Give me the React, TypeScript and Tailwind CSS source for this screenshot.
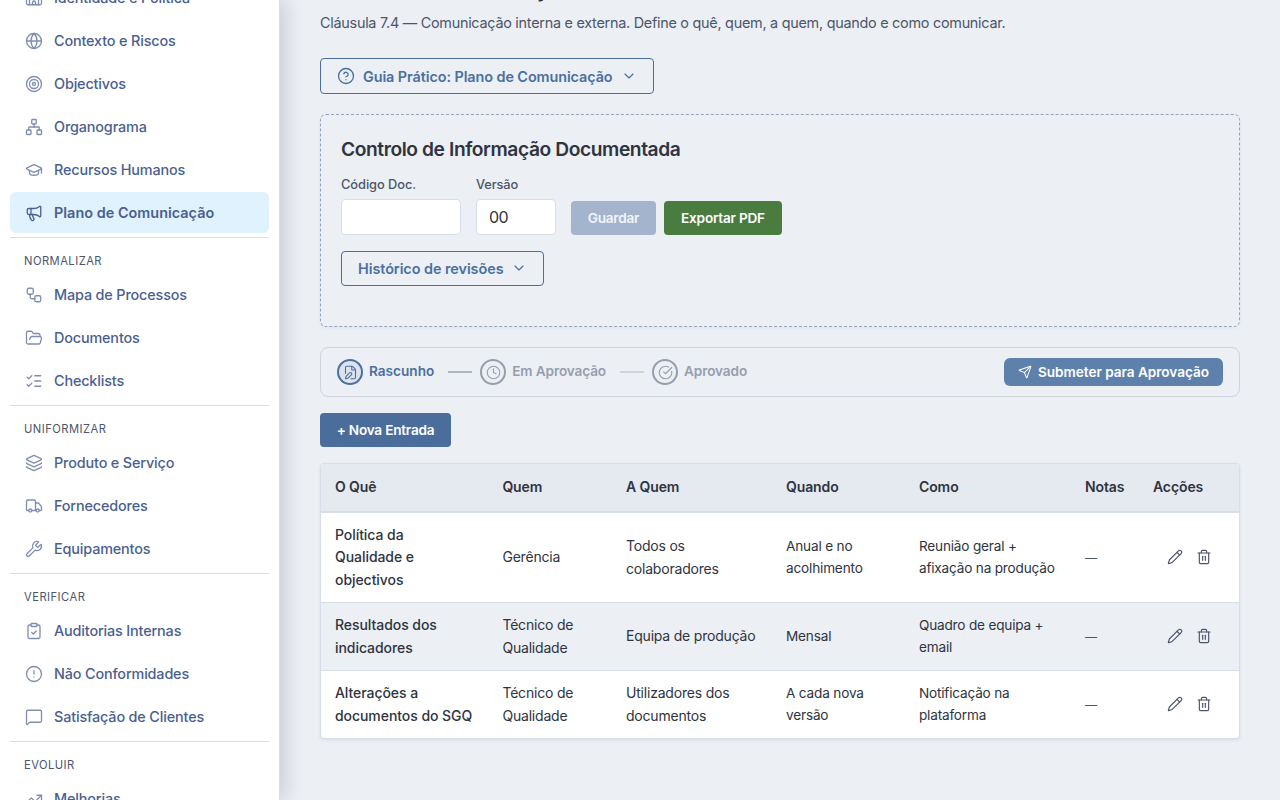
import React from "react";
import {
  Building2, Globe, Target, Network, GraduationCap, Megaphone, Workflow, FolderOpen, ListChecks,
  Layers, Truck, Wrench, ClipboardCheck, CircleAlert, MessageSquare, TrendingUp, CircleHelp,
  ChevronDown, FilePen, Clock, CircleCheckBig, Send, Pencil, Trash2,
} from "lucide-react";

type Item = { label: string; icon: React.ElementType; active?: boolean };
type Section = { title?: string; items: Item[] };

const sections: Section[] = [
  {
    items: [
      { label: "Identidade e Política", icon: Building2 },
      { label: "Contexto e Riscos", icon: Globe },
      { label: "Objectivos", icon: Target },
      { label: "Organograma", icon: Network },
      { label: "Recursos Humanos", icon: GraduationCap },
      { label: "Plano de Comunicação", icon: Megaphone, active: true },
    ],
  },
  {
    title: "NORMALIZAR",
    items: [
      { label: "Mapa de Processos", icon: Workflow },
      { label: "Documentos", icon: FolderOpen },
      { label: "Checklists", icon: ListChecks },
    ],
  },
  {
    title: "UNIFORMIZAR",
    items: [
      { label: "Produto e Serviço", icon: Layers },
      { label: "Fornecedores", icon: Truck },
      { label: "Equipamentos", icon: Wrench },
    ],
  },
  {
    title: "VERIFICAR",
    items: [
      { label: "Auditorias Internas", icon: ClipboardCheck },
      { label: "Não Conformidades", icon: CircleAlert },
      { label: "Satisfação de Clientes", icon: MessageSquare },
    ],
  },
  { title: "EVOLUIR", items: [{ label: "Melhorias", icon: TrendingUp }] },
];

const headers = ["O Quê", "Quem", "A Quem", "Quando", "Como", "Notas", "Acções"];

const rows = [
  {
    height: "h-[90px]",
    cells: ["Política da Qualidade e objectivos", "Gerência", "Todos os colaboradores", "Anual e no acolhimento", "Reunião geral + afixação na produção"],
  },
  {
    height: "h-[68px] bg-[#eceff4]",
    cells: ["Resultados dos indicadores", "Técnico de Qualidade", "Equipa de produção", "Mensal", "Quadro de equipa + email"],
  },
  {
    height: "h-[67px]",
    cells: ["Alterações a documentos do SGQ", "Técnico de Qualidade", "Utilizadores dos documentos", "A cada nova versão", "Notificação na plataforma"],
  },
];

const columns = "grid grid-cols-[167.4px_123.6px_160px_133px_166px_68px_1fr] items-center";

const cellStyles = [
  "pl-3.5 pr-[15px] text-[14px] leading-[22.4px] font-medium tracking-[-0.06px]",
  "px-3.5 text-[14px] leading-[22.4px] tracking-[-0.2px]",
  "pl-3.5 pr-2 text-[14px] leading-[22.4px] tracking-[-0.2px]",
  "px-3.5 text-[13.6px] leading-[21.76px] tracking-[-0.17px]",
  "px-3.5 text-[13.6px] leading-[21.76px] tracking-[-0.19px]",
];

function Sidebar() {
  return (
    <aside className="relative z-10 h-[800px] w-[280px] shrink-0 border-r border-[#d8dee9] bg-white shadow-[4px_0_20px_rgba(46,52,64,0.2)]">
      <nav className="h-full overflow-hidden px-2.5">
        <div className="-mt-[25px]">
          {sections.map((section, i) => (
            <div key={i} className={i > 0 ? "mt-1 border-t border-[#d8dee9]" : ""}>
              {section.title && (
                <div className="h-[34px] pt-[15px] pl-3.5 text-[11.2px] leading-[17px] tracking-[0.47px] text-[#4c566a]">
                  {section.title}
                </div>
              )}
              {section.items.map(({ label, icon: Icon, active }) => (
                <a
                  key={label}
                  className={
                    active
                      ? "mt-0.5 flex h-[41px] items-center gap-[11px] rounded-md bg-[#e0f2fe] pl-[15px] text-[14.4px] font-semibold tracking-[0.03px] text-[#4a5f8f]"
                      : "mt-0.5 flex h-[41px] items-center gap-[11px] rounded-md pl-[15px] text-[14.4px] font-medium tracking-[-0.15px] text-[#4a5f8f]"
                  }
                >
                  <Icon size={18} strokeWidth={1.75} className={active ? "" : "opacity-70"} />
                  {label}
                </a>
              ))}
            </div>
          ))}
        </div>
      </nav>
    </aside>
  );
}

function DocumentControl() {
  return (
    <section className="mt-5 h-[213px] rounded-md border border-dashed border-[#94a3c0] px-5 pt-[21px] shadow-[0_1px_3px_rgba(76,86,106,0.06)]">
      <h2 className="text-[19.2px] leading-[27px] font-semibold tracking-[-0.41px]">Controlo de Informação Documentada</h2>
      <div className="mt-3.5 flex items-end">
        <label className="w-[120px] text-[12.8px] leading-4 font-medium tracking-[-0.04px] text-[#4c566a]">
          Código Doc.
          <span className="mt-1.5 block h-9 rounded border border-[#d8dee9] bg-white" />
        </label>
        <label className="ml-[15px] w-20 text-[12.8px] leading-4 font-medium tracking-[-0.1px] text-[#4c566a]">
          Versão
          <span className="mt-1.5 flex h-9 items-center rounded border border-[#d8dee9] bg-white px-3 text-base font-normal tracking-[-0.5px] text-[#2e3440]">
            00
          </span>
        </label>
        <button className="ml-[15px] h-[34px] w-[85px] rounded bg-[#a5b4cd] text-[13.6px] font-semibold tracking-[-0.22px] text-[#f1f4f8]">Guardar</button>
        <button className="ml-2 h-[34px] w-[118px] rounded bg-[#4a7c3f] text-[13.6px] font-semibold tracking-[-0.22px] text-white">Exportar PDF</button>
      </div>
      <button className="mt-4 flex h-[35px] w-[203px] items-center rounded border border-[#4a6fa0] pl-4 text-[14.4px] font-semibold tracking-[-0.05px] text-[#4a6fa0]">
        Histórico de revisões
        <ChevronDown size={16} strokeWidth={1.75} className="mb-0.5 ml-[7px]" />
      </button>
    </section>
  );
}

function ApprovalFlow() {
  return (
    <section className="mt-5 flex h-[50px] items-center rounded-lg border border-[#ced2d9] px-4 text-[13.6px] leading-5 font-semibold text-[#969eae]">
      <span className="flex size-[26px] items-center justify-center rounded-full border-2 border-[#4a6fa0] bg-[#dce3ec] text-[#4a6fa0]">
        <FilePen size={15} strokeWidth={1.75} />
      </span>
      <span className="ml-1.5 pb-0.5 text-[#4a6fa0]">Rascunho</span>
      <span className="ml-3.5 h-0.5 w-6 bg-[#b0b7c4]" />
      <span className="ml-2 flex size-[26px] items-center justify-center rounded-full border-2 border-[#969eae]">
        <Clock size={15} strokeWidth={1.75} />
      </span>
      <span className="ml-1.5 pb-0.5 tracking-[-0.12px]">Em Aprovação</span>
      <span className="ml-3.5 h-0.5 w-6 bg-[#ced3dc]" />
      <span className="ml-2 flex size-[26px] items-center justify-center rounded-full border-2 border-[#969eae]">
        <CircleCheckBig size={15} strokeWidth={1.75} />
      </span>
      <span className="ml-1.5 pb-0.5 tracking-[-0.1px]">Aprovado</span>
      <button className="ml-auto flex h-7 w-[219px] items-center gap-1.5 rounded-md bg-[#5e81ac] pl-3.5 tracking-[-0.03px] whitespace-nowrap text-white">
        <Send size={14} strokeWidth={1.75} />
        Submeter para Aprovação
      </button>
    </section>
  );
}

function PlanTable() {
  return (
    <section className="mt-4 overflow-hidden rounded border border-[#d8dee9] bg-white shadow-[0_1px_3px_rgba(46,52,64,0.1)]">
      <div className={`${columns} h-[49px] border-b-2 border-[#d8dee9] bg-[#e5e9f0] pb-px text-[14px] leading-5 font-semibold tracking-[-0.1px]`}>
        {headers.map((h) => (
          <div key={h} className="pl-3.5">{h}</div>
        ))}
      </div>
      {rows.map((row, r) => (
        <div key={r} className={`${columns} ${row.height} border-b border-[#d8dee9] last:border-b-0`}>
          {row.cells.map((cell, c) => (
            <div key={c} className={cellStyles[c]}>{cell}</div>
          ))}
          <div className="px-3.5 text-[12px] leading-4 text-[#4c566a]">—</div>
          <div className="flex items-center gap-[13px] pb-px pl-7 text-[#4c566a]">
            <Pencil size={16} strokeWidth={1.75} />
            <Trash2 size={16} strokeWidth={1.75} />
          </div>
        </div>
      ))}
    </section>
  );
}

export default function App() {
  return (
    <div className="flex h-[800px] w-full overflow-hidden bg-[#eceff4] font-['Inter',sans-serif] text-[#2e3440]">
      <Sidebar />
      <main className="min-w-0 flex-1 px-10">
        <h1 className="-mt-7 h-[34px] text-[24px] leading-[34px] font-bold tracking-[-0.75px]">Plano de Comunicação</h1>
        <p className="mt-[5px] h-6 text-[14.4px] leading-6 tracking-[-0.26px] text-[#4c566a]">
          Cláusula 7.4 — Comunicação interna e externa. Define o quê, quem, a quem, quando e como comunicar.
        </p>
        <button className="mt-[23px] flex h-9 w-[334px] items-center rounded border border-[#4a6fa0] pl-4 text-[14.4px] font-semibold tracking-[-0.08px] whitespace-nowrap text-[#4a6fa0]">
          <CircleHelp size={18} strokeWidth={1.75} className="mr-2" />
          <span className="pt-px">Guia Prático: Plano de Comunicação</span>
          <ChevronDown size={16} strokeWidth={1.75} className="ml-2" />
        </button>
        <DocumentControl />
        <ApprovalFlow />
        <button className="mt-4 block h-[34px] w-[131px] rounded bg-[#4a6d9c] text-[13.6px] font-semibold tracking-[-0.22px] text-white">+ Nova Entrada</button>
        <PlanTable />
      </main>
    </div>
  );
}
